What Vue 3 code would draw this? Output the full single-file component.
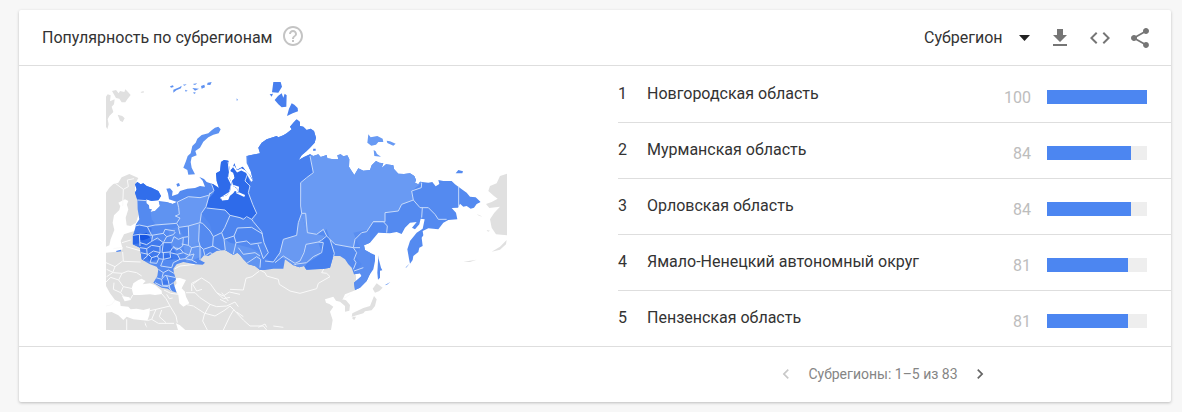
<script setup>
import { ref } from 'vue'

const level = ref('region')

const regions = [
  { name: 'Новгородская область', value: 100 },
  { name: 'Мурманская область', value: 84 },
  { name: 'Орловская область', value: 84 },
  { name: 'Ямало-Ненецкий автономный округ', value: 81 },
  { name: 'Пензенская область', value: 81 }
]
</script>

<template>
  <section class="card">
    <header class="head">
      <h2 class="title">Популярность по субрегионам</h2>
      <button class="icon-btn help" type="button" aria-label="Справка">
        <svg width="24" height="24" viewBox="0 0 24 24"><path d="M11 18h2v-2h-2v2zm1-16C6.48 2 2 6.48 2 12s4.480 10 10 10 10-4.480 10-10S17.520 2 12 2zm0 18c-4.410 0-8-3.590-8-8s3.590-8 8-8 8 3.590 8 8-3.590 8-8 8zm0-14c-2.210 0-4 1.790-4 4h2c0-1.100.9-2 2-2s2 .9 2 2c0 2-3 1.750-3 5h2c0-2.250 3-2.500 3-5 0-2.210-1.790-4-4-4z" /></svg>
      </button>
      <div class="tools">
        <div class="picker">
          <select v-model="level" aria-label="Уровень">
            <option value="region">Субрегион</option>
          </select>
          <svg class="caret" width="12" height="6" viewBox="0 0 12 6"><path d="M0 0h11L5.500 6z" /></svg>
        </div>
        <button class="icon-btn" type="button" aria-label="Скачать">
          <svg width="24" height="24" viewBox="0 0 24 24"><path d="M19 9h-4V3H9v6H5l7 7 7-7zM5 18v2h14v-2H5z" /></svg>
        </button>
        <button class="icon-btn" type="button" aria-label="Код">
          <svg width="24" height="24" viewBox="0 0 24 24"><path d="M9.400 16.600L4.800 12l4.600-4.600L8 6l-6 6 6 6 1.400-1.400zm5.200 0l4.600-4.600-4.600-4.600L16 6l6 6-6 6-1.400-1.400z" /></svg>
        </button>
        <button class="icon-btn" type="button" aria-label="Поделиться">
          <svg width="24" height="24" viewBox="0 0 24 24"><path d="M18 16.080c-.76 0-1.440.3-1.960.77L8.910 12.700c.05-.23.090-.46.090-.7s-.04-.47-.09-.7l7.050-4.110c.54.5 1.250.81 2.040.81 1.660 0 3-1.340 3-3s-1.340-3-3-3-3 1.340-3 3c0 .24.040.47.090.7L8.040 9.810C7.500 9.310 6.790 9 6 9c-1.660 0-3 1.340-3 3s1.340 3 3 3c.79 0 1.500-.31 2.040-.81l7.120 4.160c-.05.21-.08.43-.08.65 0 1.610 1.310 2.920 2.920 2.920s2.920-1.310 2.920-2.920-1.310-2.920-2.920-2.920z" /></svg>
        </button>
      </div>
    </header>

    <div class="content">
      <div class="map-pane">
        <svg class="map" viewBox="18 18 1203 744" role="img" aria-label="Карта">
          <defs>
            <clipPath id="land">
              <path d="M105 325L112 318L122 325L130 322L140 330L155 335L175 345L183 360L175 373L155 375L138 370L140 382L147 388L148 398L155 400L152 408L165 405L180 390L176 375L200 378L218 384L231 378L207 370L204 352L199 338L210 337L218 346L216 360L234 354L240 345L262 338L285 336L300 330L315 332L308 314L298 303L312 309L320 318L340 325L357 336L350 315L348 292L360 285L363 258L372 252L385 254L388 275L385 300L395 320L390 345L380 358L362 364L366 374L385 372L390 360L400 352L405 345L416 352L412 338L400 330L396 315L404 306L400 290L390 284L398 276L403 262L410 282L428 272L440 288L452 300L460 317L452 285L440 262L439 240L480 232L475 215L485 200L500 190L530 180L535 184L550 178L560 172L575 160L570 152L580 140L590 130L600 138L600 150L610 152L620 162L632 158L642 165L648 185L644 200L630 215L620 225L605 238L596 252L612 243L630 235L640 240L655 235L662 243L680 237L682 247L700 250L715 250L712 238L722 235L730 241L742 238L748 250L747 272L755 285L763 297L775 277L790 284L810 282L815 268L828 255L838 260L850 262L845 276L858 265L880 268L882 279L895 293L912 294L930 292L943 300L948 312L945 320L955 325L960 317L985 320L997 318L1007 331L1018 324L1015 312L1030 315L1055 315L1065 325L1075 332L1100 350L1110 362L1127 364L1142 378L1130 384L1122 395L1112 398L1100 390L1090 392L1080 383L1074 395L1055 396L1068 410L1072 430L1045 432L1030 440L1015 460L985 457L968 465L970 478L965 485L968 510L958 515L955 528L940 540L938 552L930 563L927 548L922 520L930 495L950 470L968 458L974 430L962 428L958 445L945 460L936 455L950 438L930 440L915 455L905 474L890 468L870 472L835 470L825 482L810 500L792 508L795 522L810 530L825 537L825 555L820 580L808 598L800 615L780 635L765 642L762 620L785 600L780 592L762 595L755 575L745 565L735 550L720 540L700 540L690 575L672 578L650 580L620 582L612 570L598 574L580 568L555 550L550 578L520 578L495 582L480 582L465 570L445 565L430 550L420 537L412 530L400 537L375 522L350 525L325 540L312 538L300 552L315 560L308 566L285 565L250 558L230 565L220 578L222 592L228 610L220 620L230 650L215 645L203 638L185 635L160 620L172 600L175 580L170 572L150 565L138 558L125 550L120 515L98 505L98 480L106 455L108 445L118 430L113 400L112 372L105 350L110 340z" />
            </clipPath>
          </defs>

          <g class="foreign">
            <path d="M18 62L23 55L32 58L30 76L44 70L42 85L35 92L40 108L28 120L23 130L26 145L22 160L18 152z" />
            <path d="M36 45L48 42L56 52L60 45L73 48L76 40L84 48L92 57L82 70L76 79L65 79L58 68L48 66z" />
            <path d="M53 116L67 120L74 127L68 138L60 134z" />
            <path d="M122 48l9 -3v5h-8z" />
            <path d="M18 350L28 335L40 324L55 320L65 304L88 294L115 306L105 325L105 345L112 372L116 415L108 440L92 450L80 448L77 425L85 400L80 384L70 378L62 385L58 402L42 418L38 440L43 462L32 490L28 508L18 512z" />
            <path d="M18 530L48 527L68 520L62 495L72 475L100 466L300 500L750 500L768 600L768 642L735 655L728 670L738 673L750 687L748 704L735 707L735 690L720 677L708 674L700 662L675 670L678 680L688 684L700 692L690 707L698 732L693 762L18 762z" />
            <path d="M830 622L848 635L838 645L825 650L818 638z" />
            <path d="M822 660L830 670L825 690L815 703L795 706L790 712L770 718L755 722L757 712L790 696L810 690z" />
            <path d="M758 722L768 722L763 732L757 728z" />
            <path d="M1221 293L1200 300L1190 322L1170 330L1165 345L1182 360L1193 368L1175 378L1158 384L1168 396L1200 392L1183 410L1170 430L1175 455L1188 475L1221 478z" />
            <path d="M1220 492L1200 512L1175 527L1200 521L1218 505z" />
            <path d="M1130 414l12 5 5 3-10-3zM1160 462l10 2-6 3zM1090 557l20-3 20-3-20 7z" />
          </g>

          <g class="water">
            <path d="M95 637L100 622L115 612L125 608L137 615L128 625L150 622L165 627L185 644L186 654L165 657L150 655L120 657L100 657z" />
            <path d="M226 607L240 606L258 612L250 627L245 637L255 647L258 662L268 682L250 692L238 682L235 657L220 634L230 622z" />
            <path d="M18 630L30 652L45 672L60 678L62 690L85 692L92 700L110 698L130 702L150 697L148 717L142 734L100 730L80 722L70 732L55 718L35 708L18 710z" />
            <path d="M66 660L88 664L92 672L74 676zM228 742L240 748L256 762L234 762zM134 736l8 20-7-10zM55 380l20-10 10 5-5 12-20 2z" />
          </g>

          <g class="frontier">
            <path d="M46 322L70 340L68 390M70 340L85 332L82 312L102 308M40 518L68 514M66 500L92 492M78 512L120 524M68 528L70 556L122 558M18 560L45 572L68 555M20 580L40 590L66 592L84 585L110 590L125 600M45 572L38 590L20 602M66 592L56 612L70 632L98 638M56 612L32 604L18 618M70 632L62 650L40 640L42 620M62 650L70 660M98 657L90 672M186 654L198 668L210 690L168 700L150 704M192 642L212 652L235 655M200 655L208 668L218 666M168 700L155 730L142 734M210 690L228 720L232 740M155 730L175 742L222 742M185 702L178 722L198 740M80 730L80 762M260 686L280 690L314 712L308 735L322 762M258 650L285 650L300 665L330 685L315 712M275 645L275 622L305 606L330 622L350 650L370 660L388 648L420 655M298 610L278 625L290 645L306 640M330 685L350 692L380 690L405 678L415 692M350 650L370 668L390 664M360 670L380 680M365 650L385 675M315 712L345 720L375 702L390 690M370 762L390 720L402 700M225 578L240 570L285 565M390 690L400 700L430 732L450 750L490 750L500 762M390 640L430 642L438 607L456 602L478 585M480 582L495 590L500 600L535 610L538 625L570 645L600 652L650 638L655 622L690 602L680 592L665 590L672 578M728 670L750 655M410 708L430 722M520 750L550 754M475 754L495 744L500 754M18 690L35 686L45 672" />
          </g>

          <g clip-path="url(#land)">
            <path fill="#548af0" d="M80 120h1080v550H80z" />
            <path fill="#316eeb" d="M90 305H195V372L140 376L105 370z" />
            <path fill="#5f93f1" d="M150 380L232 378L236 395L240 425L230 442L170 450L155 430L150 400z" />
            <path fill="#6798f3" d="M232 378L265 362L300 365L330 358L322 385L304 412L300 440L268 450L235 452L240 425z" />
            <path fill="#2e6bea" d="M330 240H425L440 290L450 320L445 350L458 385L470 412L455 430L420 425L390 418L375 402L320 396L324 370L342 350L335 325z" />
            <path fill="#4880ef" d="M436 120H660V220L630 240L640 290L602 320L602 390L605 412L595 440L590 478L550 490L540 530L520 558L492 545L505 530L492 500L485 467L460 437L470 412L458 385L445 350L450 320z" />
            <path fill="#699af3" d="M630 235L700 220L960 230L965 320L935 345L940 372L905 385L895 405L855 410L855 437L820 437L800 467L785 470L765 490L760 515L705 505L690 490L680 460L650 475L620 470L605 412L602 320L640 290z" />
            <path fill="#6999f2" d="M605 412L595 440L590 478L550 490L535 540L555 550L580 568L600 555L618 505L655 498L675 480L650 475L620 470z" />
            <path fill="#6495f1" d="M618 505L655 498L665 530L620 570L625 590L550 580L585 560L600 555z" />
            <path fill="#4780ee" d="M675 480L690 490L703 532L695 580H610L620 562L660 537L670 492z" />
            <path fill="#4e85ef" d="M320 396L375 402L390 418L455 430L460 437L485 467L492 500L420 495L390 505L365 470L340 482L330 445L304 412z" />
            <path fill="#6094f1" d="M390 500L450 515L480 530L482 585H430L400 540L370 530L375 490z" />
            <path fill="#5a8ef0" d="M760 470L810 460V650H750L760 595L785 565L765 540L780 515z" />
            <path fill="#6597f2" d="M250 510L300 500L308 540L260 560z" />
            <path fill="#6798f2" d="M265 450L300 440L295 500L268 510z" />
            <path fill="#407aed" d="M108 450L118 447L155 455L150 490L210 500L240 550L120 555L95 505z" />
            <path fill="#2966e9" d="M95 475L118 472L120 502L98 505z" />
            <path fill="#1755e2" d="M115 475L140 470L150 485L130 495L118 492z" />
            <path fill="#2f6deb" d="M122 495L150 486L160 495L135 508L120 512z" />
            <path fill="#3370eb" d="M142 542l14-4 8 14-16 4zM192 537l22-2 4 13-24 3z" />
            <path fill="#5d91f1" d="M205 462L235 452L250 480L245 520L215 512z" />
            <path fill="#3f79ec" d="M184 612L207 614L208 628L188 630z" />
            <g class="borders">
              <path d="M112 372L140 374M232 378L265 362L300 365L325 358L342 344L335 325M232 378L236 395L238 415L226 420L240 426L230 442L237 454L265 450L300 440L304 412L318 392L330 350M320 396L375 402L390 418L420 425L430 430L440 422L455 430L470 412L458 385L445 350L450 330L435 315L444 290L430 272M455 430L460 437L485 467L492 500L505 530L490 548L480 520L474 505M630 240L640 290L620 305L602 320L602 390L605 412L595 440L590 478L550 490L540 530L520 558L495 555M605 412L617 412L622 470L650 475L670 460L680 480L690 490L705 505L760 515L780 515M965 320L964 335L935 345L940 372L905 385L895 405L855 410L855 437L820 437L800 467L785 470L765 490L760 515L770 530L762 550L768 560L760 580M940 372L960 395L985 395L1005 415L1015 430L1040 430M967 395L965 425M820 437L850 437L862 450L860 470M690 490L703 532L700 545M618 505L655 498L670 500L665 530L640 542L620 560L590 564L580 568M618 505L612 530L600 555L585 562L550 540L525 560M680 480L665 492L655 498M1076 330V400M762 585L790 575M300 440L308 442L330 465L340 482L365 470L374 455L390 418M340 482L338 510L365 525M365 470L372 490L402 480L412 456L455 454L488 474M372 490L376 522M402 480L408 500L440 495L452 505L485 500M408 500L400 535M415 515L430 535L465 530L480 540M440 562L470 542L482 550L480 575" />
              <path d="M105 450L118 447L142 452L165 447L230 442M142 452L155 478L135 475L118 475L98 478M118 475L120 510M155 478L190 472L200 482L220 476L226 468M190 472L195 460L225 465M120 500L140 506L155 496L158 478M120 515L140 518L155 508L180 512L190 500L215 500M155 496L172 486L190 500L200 482M190 500L186 530L210 528L218 515L240 518M215 500L222 482L235 490L250 484L265 482M235 454L240 475M265 450L266 482L265 508L245 504M250 484L248 510L230 522L220 510M122 530L145 535L160 525L180 530L180 512M140 518L142 540L130 550M145 535L155 545L172 540L180 530M155 545L150 560L170 562L176 548L190 550L190 530M176 548L172 540M190 550L182 570L215 575L220 560L240 550L232 535L210 530L212 545L190 550M240 518L250 530L232 535M250 530L268 538L255 548L240 550M268 538L275 515L265 508M275 515L300 510L296 495L298 445M300 510L310 520L340 510M300 510L300 552M275 552L282 534L268 538M255 548L275 552L290 560M310 520L315 540L330 530L342 535M175 580L190 590L205 582L222 592M168 605L185 610L195 598L228 605M185 610L188 628L208 628L220 620M165 620L185 630L205 632L215 645M200 600L205 615L210 640M190 590L186 605" />
            </g>
            <path class="inlets" d="M386 258L390 290L386 305L396 325L390 350L362 368M396 328L414 334L412 350L434 360M400 270L412 286L424 280L440 288L456 316" />
          </g>

          <g class="islands">
            <path fill="#5d92f2" d="M355 152L362 160L356 172L340 176L325 184L310 197L300 215L286 225L290 238L275 244L272 258L275 275L285 295L265 296L262 282L250 275L258 255L263 240L272 232L277 210L287 200L292 188L305 177L325 172L335 163L345 155z" />
            <path fill="#487fee" d="M520 18H542L546 32L535 50L516 49zM534 60L545 52L550 65L554 53L560 58L559 92L545 94L535 85L524 72zM509 55l10-2-4 9zM575 82L583 86L593 96L594 106L578 112L561 120L567 98zM640 218h7v6h-8z" />
            <path fill="#5e91f1" d="M210 31l9-3 2 5-8 2zM220 41l18-7 7-5-2 8-14 6-9 7zM255 41l8 3-6 3zM277 36l20 2-12 6zM280 48l8 2-6 4zM303 30l10-4 2 8-10 4zM323 20l12-2-4 9-10-1zM248 26l12-1-6 4zM278 24l14-2-7 5zM410 67l4 5-4 2z" />
            <path fill="#689af4" d="M805 175L812 184L832 180L848 188L850 198L835 198L828 206L814 209L802 200zM860 194L870 196L887 203L880 209L862 201zM821 222l6 4 4 8 12 8-20-2z" />
            <path fill="#548af0" d="M1067 292l8-10 14 4-2 6zM229 324l8-3 3 8-8 3zM835 538L836 548L843 575L847 583L840 584L840 605L834 611L832 590zM48 525l14-4 2 5-14 2zM854 628l17-10-10 8zM916 575l12-12-8 11z" />
          </g>
        </svg>
      </div>

      <table class="ranking">
        <tbody>
          <tr v-for="(item, i) in regions" :key="item.name">
            <td class="rank">{{ i + 1 }}</td>
            <td class="name">{{ item.name }}</td>
            <td class="value">{{ item.value }}</td>
            <td class="meter"><div class="track"><div class="fill" :style="{ width: item.value + '%' }"></div></div></td>
          </tr>
        </tbody>
      </table>
    </div>

    <footer class="foot">
      <nav class="pager" aria-label="Страницы">
        <button class="icon-btn prev" type="button" disabled aria-label="Назад">
          <svg width="20" height="20" viewBox="0 0 24 24"><path d="M15.410 7.410L14 6l-6 6 6 6 1.410-1.410L10.830 12z" /></svg>
        </button>
        <span>Субрегионы: 1–5 из 83</span>
        <button class="icon-btn next" type="button" aria-label="Вперёд">
          <svg width="20" height="20" viewBox="0 0 24 24"><path d="M10 6L8.590 7.410 13.170 12l-4.580 4.590L10 18l6-6z" /></svg>
        </button>
      </nav>
    </footer>
  </section>
</template>

<style>
body {
  background: #f7f7f7;
}
</style>

<style scoped>
.card {
  margin: 10px 11px 10px 19px;
  background: #fff;
  border-radius: 2px;
  box-shadow: 0 1px 3px rgba(0, 0, 0, 0.24);
  color: #333;
  font: 16px/24px Roboto, "Noto Sans", sans-serif;
}
.head {
  display: flex;
  align-items: center;
  box-sizing: border-box;
  min-height: 56px;
  padding: 0 19px 0 23px;
  border-bottom: 1px solid #dedede;
}
.title {
  margin: 0;
  font-size: 16px;
  font-weight: 400;
}
.icon-btn {
  display: block;
  padding: 0;
  border: 0;
  background: none;
  color: #757575;
}
.icon-btn svg {
  display: block;
  fill: currentColor;
}
.help {
  margin-left: 9px;
  padding-bottom: 4px;
  color: #c4c4c4;
}
.tools {
  display: flex;
  align-items: center;
  gap: 16px;
  margin-left: auto;
}
.picker {
  display: grid;
  align-items: center;
  width: 108px;
}
.picker select {
  grid-area: 1 / 1;
  appearance: none;
  width: 100%;
  height: 32px;
  padding: 0;
  border: 0;
  background: none;
  color: inherit;
  font: inherit;
}
.caret {
  grid-area: 1 / 1;
  justify-self: end;
  margin-right: 1px;
  fill: #212121;
  pointer-events: none;
}
.content {
  display: grid;
  grid-template-columns: 1fr 1fr;
}
.map-pane {
  display: flex;
  align-items: center;
  padding: 0 88px 0 87px;
}
.map {
  display: block;
  width: 100%;
}
.foreign {
  fill: #e0e0e0;
}
.water {
  fill: #fff;
}
.frontier {
  fill: none;
  stroke: #fafafa;
  stroke-width: 3;
}
.borders {
  fill: none;
  stroke: #c7daf9;
  stroke-width: 3;
}
.inlets {
  fill: none;
  stroke: #fff;
  stroke-width: 6;
}
.ranking {
  width: calc(100% - 23px);
  margin-left: 23px;
  border-spacing: 0;
}
.ranking td {
  box-sizing: border-box;
  height: 56px;
  padding: 0;
  border-top: 1px solid #dedede;
}
.ranking tr:first-child td {
  border-top-color: transparent;
}
.rank {
  width: 29px;
}
.ranking .name,
.ranking .rank {
  padding-bottom: 2px;
}
.ranking .value {
  width: 60px;
  padding: 6px 16px 0 0;
  color: #bdbdbd;
  text-align: right;
}
.ranking .meter {
  width: 124px;
  padding: 4px 24px 0 0;
}
.track {
  height: 14px;
  background: #eee;
}
.fill {
  height: 100%;
  background: #4c86f1;
}
.foot {
  display: grid;
  grid-template-columns: 1fr 1fr;
  box-sizing: border-box;
  min-height: 56px;
  border-top: 1px solid #dedede;
}
.pager {
  grid-column: 2;
  display: flex;
  align-items: center;
  justify-content: center;
  gap: 12px;
  padding-bottom: 1px;
  color: #858585;
  font-size: 14px;
}
.prev {
  color: #c8c8c8;
}
.next {
  color: #666;
}
</style>
